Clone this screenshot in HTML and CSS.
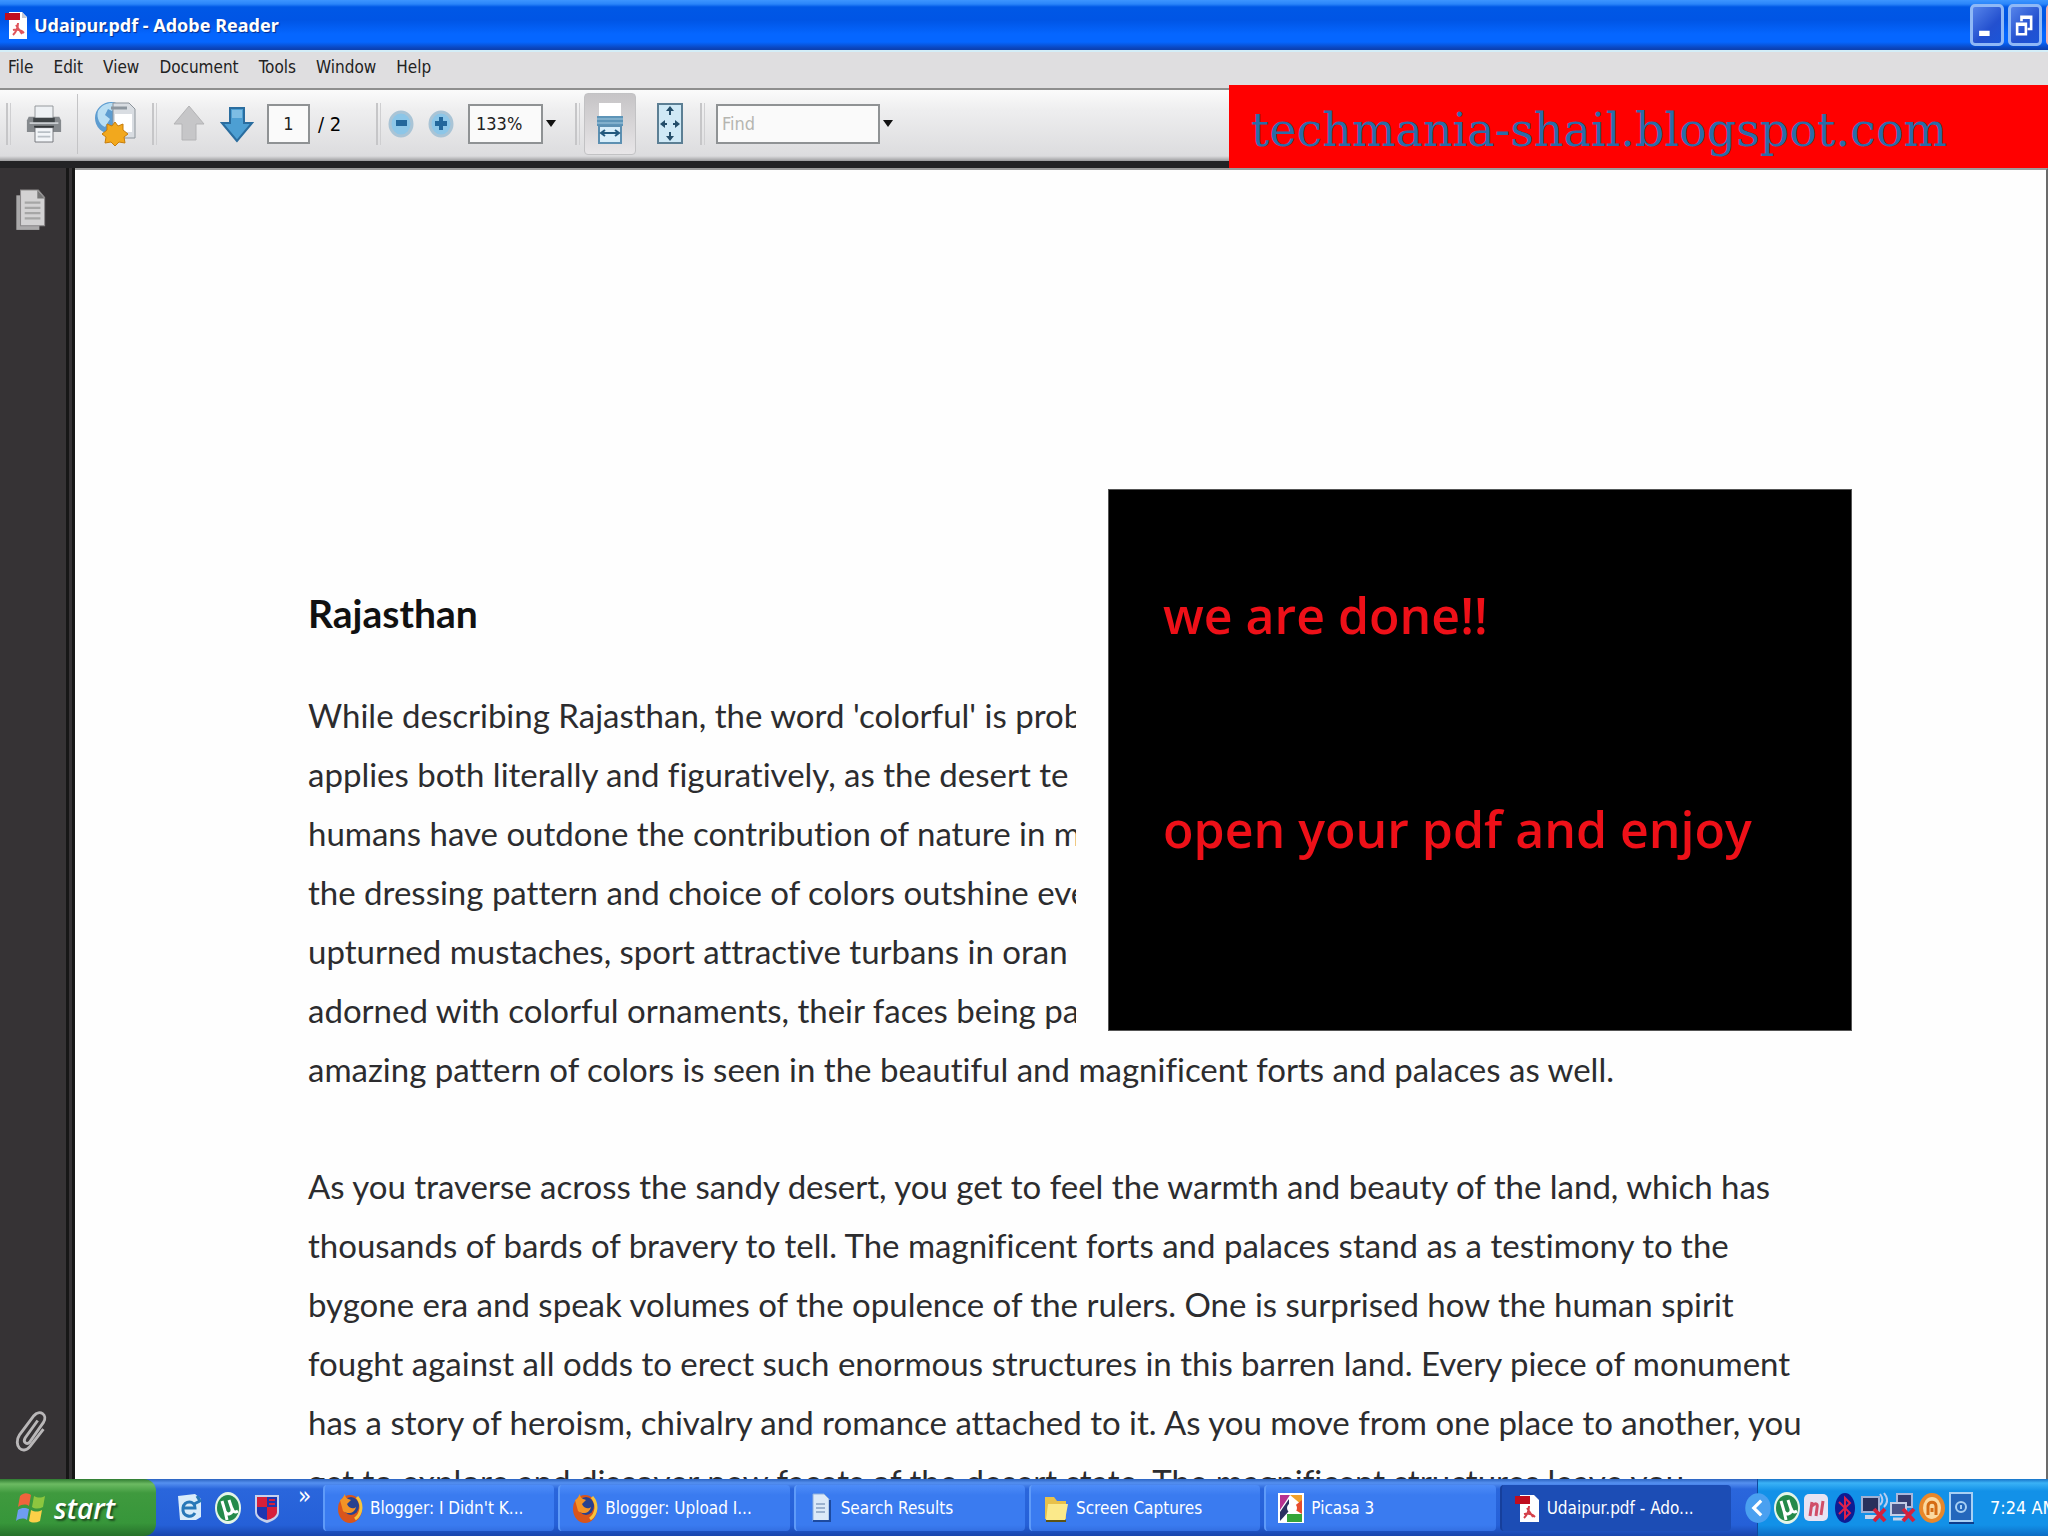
FILE: index.html
```
<!DOCTYPE html>
<html lang="en">
<head>
    <meta charset="UTF-8">
    <meta name="viewport" content="width=device-width, initial-scale=1.0">
    <title>Udaipur.pdf - Adobe Reader</title>
    <link rel="stylesheet" href="styles.css">
</head>
<body>

    <!-- title bar -->
    <header class="titlebar">
        <svg class="pdf-icon" viewBox="0 0 24 30">
            <path d="M5 2h13l5 5v22H5z" fill="#fff"/>
            <path d="M18 2v6h5z" fill="#c4c8d4"/>
            <path d="M1 3h15v7H1z" fill="#c00d1e"/>
            <path d="M9 25c4-4 5-8 5-12M9 20c4-1 8 0 11 3M12 15l6 9" fill="none" stroke="#e0555c" stroke-width="2"/>
        </svg>
        <h1>Udaipur.pdf - Adobe Reader</h1>
        <div class="window-buttons">
            <button class="win-btn" aria-label="Minimize"><svg viewBox="0 0 32 40"><path d="M7 26h12v6H7z" fill="#fff"/></svg></button>
            <button class="win-btn" aria-label="Restore"><svg viewBox="0 0 32 40"><path d="M12 15v-5h11v14h-4M12 11h11M7 18h10v12H7zM7 19h10" fill="none" stroke="#fff" stroke-width="3"/></svg></button>
            <button class="win-btn close" aria-label="Close"></button>
        </div>
    </header>

    <!-- menu -->
    <nav class="menubar">
        <button>File</button>
        <button>Edit</button>
        <button>View</button>
        <button>Document</button>
        <button>Tools</button>
        <button>Window</button>
        <button>Help</button>
    </nav>

    <!-- toolbar -->
    <div class="toolbar">
        <span class="grip"></span>
        <button class="tool print" aria-label="Print">
            <svg viewBox="0 0 40 44">
                <path d="M3 14h34l2 4v13H1V18z" fill="#85898d"/>
                <path d="M10 2h20v14H10z" fill="#eef1f4" stroke="#8d9194"/>
                <path d="M8 15h24v6H8z" fill="#3f4447"/>
                <path d="M4 21h32" stroke="#c8ccd0" stroke-width="2"/>
                <path d="M10 26h20v16H10z" fill="#f2f5f8" stroke="#6d7175"/>
                <path d="M9 25h22" stroke="#33373a" stroke-width="2"/>
                <path d="M13 31h14M13 36h14" stroke="#b9c0c6" stroke-width="2"/>
            </svg>
        </button>
        <span class="line"></span>
        <button class="tool share" aria-label="Collaborate">
            <svg viewBox="0 0 44 48">
                <circle cx="18" cy="18" r="16" fill="#5d9cd0"/>
                <path d="M5 11c5-9 15-9 19-7l-5 7-4-2-3 6 5 4-5 8C7 25 3 18 5 11z" fill="#b9def3"/>
                <path d="M20 3h16l6 6v29H20z" fill="#d9dde2" stroke="#8c949b"/>
                <path d="M22 14h17v18H22z" fill="#fff"/>
                <path d="M18 8h16" stroke="#8d969e" stroke-width="3"/>
                <path d="M22 22l3 4 5-2v6l5 4-4 3 1 6-6-1-4 4-4-4-6 1 1-6-4-3 5-4v-6l5 2z" fill="#f2a81d" stroke="#c77d0b"/>
            </svg>
        </button>
        <span class="grip wide"></span>
        <button class="tool" aria-label="Previous page">
            <svg viewBox="0 0 34 38"><path d="M17 1l15 18h-8v16H10V19H2z" fill="#c6c6c8" stroke="#b4b4b6"/></svg>
        </button>
        <button class="tool" aria-label="Next page">
            <svg viewBox="0 0 34 38">
                <path d="M17 36L2 18h8V3h14v15h8z" fill="#4d9fd3" stroke="#2a6d9f" stroke-width="2"/>
                <path d="M12 5h10v8H12z" fill="#7dbde4"/>
            </svg>
        </button>
        <input class="field page-no" type="text" value="1" aria-label="Page number">
        <span class="page-count">/ 2</span>
        <span class="grip"></span>
        <button class="tool zoom" aria-label="Zoom out">
            <svg viewBox="0 0 26 28"><ellipse cx="13" cy="14" rx="11" ry="12" fill="#8cc6e8" stroke="#a9c4d6" stroke-width="3"/><path d="M8 10h11v6H8z" fill="#22679c"/></svg>
        </button>
        <button class="tool zoom" aria-label="Zoom in">
            <svg viewBox="0 0 26 28"><ellipse cx="13" cy="14" rx="11" ry="12" fill="#8cc6e8" stroke="#a9c4d6" stroke-width="3"/><path d="M11 7h4v4h4v5h-4v4h-4v-4H7v-5h4z" fill="#22679c"/></svg>
        </button>
        <input class="field zoom-level" type="text" value="133%" aria-label="Zoom level">
        <button class="drop" aria-label="Zoom levels"></button>
        <span class="grip"></span>
        <button class="tool fit active" aria-label="Fit width">
            <svg viewBox="0 0 28 44">
                <path d="M3 1h22v14H3z" fill="#fff"/>
                <path d="M1 14h26v10H1z" fill="#5e95b8"/>
                <path d="M1 17h26M1 21h26" stroke="#a4cae0"/>
                <path d="M3 24h22v17H3z" fill="#d8eefa" stroke="#5d90b2" stroke-width="2"/>
                <path d="M6 31h16M9 28l-4 3 4 3M19 28l4 3-4 3" fill="none" stroke="#23597e" stroke-width="2"/>
            </svg>
        </button>
        <button class="tool fit" aria-label="Fit page">
            <svg viewBox="0 0 28 44">
                <path d="M2 2h24v39H2z" fill="#cfe9f6" stroke="#5c7f94" stroke-width="2"/>
                <path d="M14 4l4 5h-8zM14 39l4-5h-8zM4 22l5-4v8zM24 22l-5-4v8z" fill="#244e6a"/>
                <path d="M14 8v5M14 30v5M8 22h3M17 22h3" stroke="#244e6a" stroke-width="2"/>
            </svg>
        </button>
        <span class="grip wide"></span>
        <input class="field find" type="text" placeholder="Find" aria-label="Find">
        <button class="drop" aria-label="Find options"></button>
        <div class="banner">techmania-shail.blogspot.com</div>
    </div>

    <!-- document -->
    <main class="viewer">
        <aside class="sidebar">
            <button aria-label="Pages">
                <svg viewBox="0 0 32 42">
                    <path d="M2 7h22v33H2z" fill="#aaa9aa"/>
                    <path d="M6 2h17l6 7v27H6z" fill="#d3d2d3" stroke="#8b898a"/>
                    <path d="M22 2v8h7z" fill="#777"/>
                    <path d="M10 14h15M10 19h15M10 24h15M10 29h15" stroke="#a6a6a6" stroke-width="2"/>
                </svg>
            </button>
            <button aria-label="Attachments">
                <svg viewBox="0 0 34 46">
                    <path d="M24 12L11 30c-3 5 2 8 5 4l14-20c5-8-4-14-10-7L5 27C-2 38 8 49 16 39l14-18" fill="none" stroke="#b9b7b8" stroke-width="3"/>
                </svg>
            </button>
        </aside>
        <article class="page">
            <h2>Rajasthan</h2>
            <p>
                While describing Rajasthan, the word 'colorful' is prob<br>
                applies both literally and figuratively, as the desert te<br>
                humans have outdone the contribution of nature in m<br>
                the dressing pattern and choice of colors outshine eve<br>
                upturned mustaches, sport attractive turbans in oran<br>
                adorned with colorful ornaments, their faces being pa<br>
                amazing pattern of colors is seen in the beautiful and magnificent forts and palaces as well.
            </p>
            <p>
                As you traverse across the sandy desert, you get to feel the warmth and beauty of the land, which has<br>
                thousands of bards of bravery to tell. The magnificent forts and palaces stand as a testimony to the<br>
                bygone era and speak volumes of the opulence of the rulers. One is surprised how the human spirit<br>
                fought against all odds to erect such enormous structures in this barren land. Every piece of monument<br>
                has a story of heroism, chivalry and romance attached to it. As you move from one place to another, you<br>
                get to explore and discover new facets of the desert state. The magnificent structures leave you
            </p>
            <div class="note">
                <div class="note-box">
                    <p>we are done!!</p>
                    <p>open your pdf and enjoy</p>
                </div>
            </div>
        </article>
    </main>

    <!-- taskbar -->
    <footer class="taskbar">
        <button class="start">
            <svg viewBox="0 0 32 36">
                <path d="M4 6c4-4 8-3 11-1l-2 11C10 14 6 14 2 17z" fill="#f0643c"/>
                <path d="M18 6c4 2 7 2 11 0l-2 11c-4 2-8 2-11 0z" fill="#8dc63f"/>
                <path d="M2 20c4-3 8-2 11-1l-2 11C8 28 4 28 0 31z" fill="#6f9df0"/>
                <path d="M15 20c4 2 7 2 11 0l-2 11c-4 2-8 2-11 0z" fill="#fbd048"/>
            </svg>
            start
        </button>
        <div class="quick">
            <button aria-label="Internet Explorer">
                <svg viewBox="0 0 28 34">
                    <path d="M3 5l17-2 6 5v18l-5 3H5z" fill="#d9ecfa"/>
                    <path d="M20 22c-4 6-13 3-12-5s12-8 12 0H9M22 5l3 5-6 3" fill="none" stroke="#2878b8" stroke-width="3"/>
                </svg>
            </button>
            <button aria-label="uTorrent">
                <svg viewBox="0 0 28 34"><use href="#torrent"/></svg>
            </button>
            <button aria-label="Security">
                <svg viewBox="0 0 28 34">
                    <path d="M2 4h24v17c0 6-6 9-12 11C8 30 2 27 2 21z" fill="#c6d1ec"/>
                    <path d="M4 6h10v10H4zM14 16h10v5c0 4-5 7-10 8z" fill="#d5203a"/>
                    <path d="M14 6h10v10H14zM4 16h10v13C9 28 4 25 4 21z" fill="#1d36b0"/>
                    <path d="M16 9h6M16 13h6" stroke="#d5203a" stroke-width="2"/>
                </svg>
            </button>
            <span class="more">»</span>
        </div>
        <div class="tasks">
            <button class="task"><svg viewBox="0 0 26 32"><use href="#firefox"/></svg>Blogger: I Didn't K...</button>
            <button class="task"><svg viewBox="0 0 26 32"><use href="#firefox"/></svg>Blogger: Upload I...</button>
            <button class="task">
                <svg viewBox="0 0 26 32"><path d="M5 2h11l5 5v22H5z" fill="#dce9f8" stroke="#8fb0dc"/><path d="M5 29h17V8" fill="none" stroke="#1d4aa0" stroke-width="2"/><path d="M8 12h9M8 16h9M8 20h9" stroke="#9cb2cf" stroke-width="2"/></svg>
                Search Results
            </button>
            <button class="task">
                <svg viewBox="0 0 26 32"><path d="M2 5h9l3 4h9v18H2z" fill="#e8c14a"/><path d="M5 12h20l-3 16H3z" fill="#fbe98a"/><path d="M3 29h20" stroke="#5d5313" stroke-width="2"/></svg>
                Screen Captures
            </button>
            <button class="task">
                <svg viewBox="0 0 26 32"><path d="M0 1h26v30H0z" fill="#fff"/><path d="M2 3h10L2 18z" fill="#b83290"/><path d="M12 3h12v10z" fill="#f2a12b"/><path d="M24 8v14l-10-6z" fill="#e64c2e"/><path d="M9 22h15v8H9z" fill="#36a43a"/><path d="M2 20l9-13v12l-9 10z" fill="#2b2f60"/><circle cx="14" cy="16" r="5" fill="#fff"/></svg>
                Picasa 3
            </button>
            <button class="task current">
                <svg viewBox="0 0 26 32"><path d="M6 3h14l5 5v22H6z" fill="#fff"/><path d="M1 4h15v8H1z" fill="#c00d1e"/><path d="M10 26c4-4 5-8 5-12M10 22c4-1 8 0 11 3M13 16l6 9" fill="none" stroke="#d4404a" stroke-width="2"/></svg>
                Udaipur.pdf - Ado...
            </button>
        </div>
        <div class="tray">
            <button class="expand" aria-label="Show hidden icons"><svg viewBox="0 0 26 32"><ellipse cx="13" cy="16" rx="12" ry="14" fill="#4aa0f0"/><path d="M16 9l-7 7 7 7" fill="none" stroke="#fff" stroke-width="3"/></svg></button>
            <svg viewBox="0 0 28 34"><g id="torrent"><ellipse cx="14" cy="17" rx="13" ry="16" fill="#e4f5e8"/><ellipse cx="14" cy="17" rx="11" ry="13" fill="#248a4b"/><path d="M8 10l3 10c2 5 8 3 7-2l-3-9M11 20l2 9M18 17c1 4 3 5 6 3" fill="none" stroke="#fff" stroke-width="3"/></g></svg>
            <svg viewBox="0 0 28 34"><rect x="2" y="3" width="24" height="27" rx="5" fill="#e8e3f2"/><path d="M8 25l2-14M10 15c4-4 6-2 5 2l-1 8M19 24l2-14" fill="none" stroke="#d04e68" stroke-width="3"/></svg>
            <svg viewBox="0 0 28 34"><ellipse cx="14" cy="17" rx="10" ry="15" fill="#0d1c94"/><path d="M8 11l11 11-5 5V7l5 5L8 23" fill="none" stroke="#e0214c" stroke-width="2"/></svg>
            <svg viewBox="0 0 28 34"><path d="M2 6h17v15H2z" fill="#28305c" stroke="#9fb0d4" stroke-width="2"/><path d="M5 26h12" stroke="#c9d3e8" stroke-width="4"/><path d="M20 3c3 4 3 8 0 11M24 2c4 5 4 10 0 14" fill="none" stroke="#b8cdf0" stroke-width="2"/><path d="M14 18l11 12M25 18L14 30" stroke="#d3213c" stroke-width="4"/></svg>
            <svg viewBox="0 0 28 34"><path d="M8 3h15v13H8z" fill="#343c70" stroke="#a9b7dc" stroke-width="2"/><path d="M2 12h15v12H2z" fill="#4a5488" stroke="#c3cde6" stroke-width="2"/><path d="M4 28h12" stroke="#c9d3e8" stroke-width="3"/><path d="M14 18l11 12M25 18L14 30" stroke="#d3213c" stroke-width="4"/></svg>
            <svg viewBox="0 0 28 34"><ellipse cx="14" cy="17" rx="13" ry="15" fill="#e8872a"/><ellipse cx="14" cy="17" rx="9" ry="11" fill="#fbd9a0"/><path d="M10 24v-9c0-5 8-5 8 0v9M14 17v4" fill="none" stroke="#d56c14" stroke-width="3"/></svg>
            <svg viewBox="0 0 28 34"><path d="M3 2h22v28H3z" fill="#2467bc" stroke="#a8d0f4" stroke-width="2"/><path d="M2 32h25" stroke="#0d3d8c" stroke-width="2"/><circle cx="14" cy="16" r="5" fill="none" stroke="#a8d0f4" stroke-width="2"/><path d="M14 14v4" stroke="#a8d0f4" stroke-width="2"/></svg>
            <span class="clock">7:24 AM</span>
        </div>
    </footer>

    <!-- shared icon -->
    <svg class="defs">
        <defs>
            <g id="firefox">
                <ellipse cx="13" cy="17" rx="12" ry="14" fill="#d9551b"/>
                <ellipse cx="14" cy="14" rx="8" ry="9" fill="#27418f"/>
                <path d="M3 8c3-1 4-5 5-6 0 4 3 5 6 6l-4 4c2 5 7 5 9 3-1 6-8 8-13 4z" fill="#f39426"/>
                <path d="M20 5c6 7 5 17-2 22" fill="none" stroke="#f7c43c" stroke-width="3"/>
            </g>
        </defs>
    </svg>

</body>
</html>
```
FILE: styles.css
```
* {
    box-sizing: border-box;
}

body {
    margin: 0;
    height: 100vh;
    display: flex;
    flex-direction: column;
    overflow: hidden;
    font-family: "DejaVu Sans Condensed", "Open Sans", sans-serif;
    font-size: 17px;
    background-color: #fff;
}

button {
    border: none;
    padding: 0;
    background: none;
    font-family: inherit;
    font-size: inherit;
    color: inherit;
}

svg {
    display: block;
    flex: none;
}

.defs {
    position: absolute;
    width: 0;
    height: 0;
}

/* title bar */
.titlebar {
    flex: none;
    display: flex;
    align-items: center;
    height: 50px;
    padding-left: 4px;
    gap: 6px;
    overflow: hidden;
    background: linear-gradient(#3d95ff 0, #2a85fa 4px, #0058e6 7px, #0055e5 20px, #0566ff 34px, #0566ff 42px, #0b45bd 48px, #0b3fae 50px);
}

.pdf-icon {
    width: 24px;
    height: 30px;
}

.titlebar h1 {
    flex: 1;
    margin: 0;
    font-size: 18px;
    font-family: "Noto Sans", sans-serif;
    font-weight: bold;
    color: #fff;
    text-shadow: 1px 1px 1px #0a2f8c;
}

.window-buttons {
    display: flex;
    gap: 4px;
    margin-right: -32px;
}

.win-btn {
    width: 34px;
    height: 42px;
    border: 3px solid #8fb8f6;
    border-radius: 5px;
    background: linear-gradient(135deg, #5684ea, #2350cf 60%, #1b55d8);
}

.win-btn.close {
    border-color: #f0b3b0;
    background: #d8452a;
}

/* menu */
.menubar {
    flex: none;
    display: flex;
    align-items: center;
    gap: 20px;
    height: 40px;
    padding: 0 8px 6px;
    border-top: 2px solid #d4eef8;
    border-bottom: 2px solid #8e8e8e;
    background-color: #dfdee0;
    color: #222;
}

/* toolbar */
.toolbar {
    flex: none;
    position: relative;
    display: flex;
    align-items: center;
    height: 78px;
    padding: 0 8px 4px 6px;
    border-bottom: 7px solid #232325;
    background: linear-gradient(#fbfbfb, #eeeeef 20px, #dcdcde 66px, #9c9c9e 71px);
}

.grip {
    width: 5px;
    height: 42px;
    border-left: 2px solid #c6c6c8;
    border-right: 1px solid #cfcfd1;
}

.grip.wide {
    margin-right: 8px;
}

.line {
    width: 1px;
    height: 60px;
    background-color: #c4c4c6;
}

.tool {
    display: flex;
    align-items: center;
    justify-content: center;
    width: 48px;
}

.tool svg {
    width: 34px;
    height: 38px;
}

.print {
    width: 66px;
}

.print svg {
    width: 36px;
    height: 44px;
}

.share {
    width: 74px;
}

.share svg {
    width: 44px;
    height: 48px;
}

.zoom {
    width: 40px;
}

.zoom svg {
    width: 26px;
    height: 30px;
}

.fit {
    width: 52px;
    height: 62px;
    margin: 0 4px;
    border-radius: 4px;
}

.fit svg {
    width: 28px;
    height: 44px;
}

.active {
    border: 1px solid #c2c2c4;
    background: linear-gradient(#c6c4c6, #e8e6e8);
}

.field {
    height: 40px;
    border: 2px solid #8f9294;
    background-color: #fafafa;
    font-family: inherit;
    font-size: 18px;
    color: #222;
}

.field::placeholder {
    color: #b5b5b0;
    opacity: 1;
}

.page-no {
    width: 43px;
    margin-left: 6px;
    text-align: center;
}

.page-count {
    width: 58px;
    margin-left: 8px;
    font-size: 20px;
}

.zoom-level {
    width: 75px;
    margin-left: 7px;
    padding: 0 6px;
}

.drop {
    width: 16px;
    height: 40px;
    display: flex;
    align-items: center;
    justify-content: center;
    margin-right: 16px;
}

.drop::after {
    content: "";
    border: 5px solid transparent;
    border-top: 7px solid #111;
    border-bottom: none;
}

.find {
    width: 164px;
    margin-left: 3px;
    padding: 0 4px;
}

/* blog name laid over the toolbar */
.banner {
    position: absolute;
    top: -5px;
    right: 0;
    bottom: -7px;
    width: 40%;
    padding-left: 22px;
    background-color: #f00;
    color: #2a6ca8;
    font-family: "DejaVu Serif", serif;
    font-size: 46px;
    line-height: 90px;
    white-space: nowrap;
}

/* document */
.viewer {
    flex: 1;
    min-height: 0;
    display: flex;
}

.sidebar {
    flex: none;
    width: 75px;
    display: flex;
    flex-direction: column;
    justify-content: space-between;
    padding: 20px 14px 26px;
    border-right: 9px double #171717;
    background-color: #363335;
}

.sidebar svg {
    width: 34px;
    height: 44px;
}

.page {
    position: relative;
    flex: 1;
    overflow: hidden;
    padding: 413px 0 0 233px;
    border-top: 2px solid #9d9d9d;
    border-right: 2px solid #6b6b6b;
    background-color: #fefefe;
    color: #2c2c2e;
    font-family: "Lato", "Open Sans", sans-serif;
    font-variant-ligatures: none;
    white-space: nowrap;
}

.page h2 {
    margin: 0 0 43px;
    font-size: 39px;
    line-height: 60px;
    color: #111;
}

.page p {
    margin: 0 0 58px;
    font-size: 33px;
    line-height: 59px;
}

/* picture pasted over the text */
.note {
    position: absolute;
    top: 289px;
    left: 1001px;
    padding: 30px 32px 27px;
    background-color: #fefefe;
}

.note-box {
    width: 744px;
    height: 542px;
    padding: 82px 54px;
    border: 1px solid #555;
    background-color: #000;
}

.note .note-box p {
    margin: 0 0 128px;
    color: #ee1018;
    font-family: "Open Sans", sans-serif;
    font-weight: 600;
    font-size: 50px;
    line-height: 86px;
}

/* taskbar */
.taskbar {
    flex: none;
    display: flex;
    align-items: stretch;
    height: 57px;
    overflow: hidden;
    background: linear-gradient(#2b62c0 0, #5590f0 4px, #2a66dc 10px, #2560d8 46px, #1845ac 57px);
    color: #fff;
}

.start {
    display: flex;
    align-items: center;
    gap: 6px;
    width: 156px;
    padding-left: 16px;
    border-radius: 0 12px 12px 0;
    background: linear-gradient(#2f7c31 0, #6cba62 5px, #3f9a3e 14px, #37963a 44px, #26702a 57px);
    font-family: "Open Sans", sans-serif;
    font-size: 28px;
    font-style: italic;
    font-weight: 600;
    text-shadow: 2px 2px 2px #1d4f1f;
}

.start svg {
    width: 32px;
    height: 38px;
}

.quick {
    display: flex;
    align-items: center;
    gap: 11px;
    width: 167px;
    padding-left: 19px;
}

.quick svg {
    width: 28px;
    height: 34px;
}

.more {
    align-self: flex-start;
    margin-left: 6px;
    font-size: 24px;
    line-height: 34px;
}

.tasks {
    flex: 1;
    display: flex;
    gap: 4px;
    min-width: 0;
    padding-right: 26px;
}

.task {
    flex: 1;
    min-width: 0;
    display: flex;
    align-items: center;
    gap: 7px;
    padding-left: 12px;
    margin: 6px 0 5px;
    border-left: 2px solid #5f9bf8;
    border-radius: 4px;
    background: linear-gradient(#4d8cf8, #3a7bf0 10px, #3a7bf0 40px, #336fe2);
    white-space: nowrap;
}

.task svg {
    width: 26px;
    height: 32px;
}

.current {
    border-color: #163f9c;
    background: #1c4db5;
}

.tray {
    display: flex;
    align-items: center;
    gap: 1px;
    width: 291px;
    border-left: 1px solid #0f4a9f;
    background: linear-gradient(#1873c8 0, #3ab2f6 4px, #1291e8 12px, #1291e8 46px, #0c6cc4 57px);
    white-space: nowrap;
}

.tray svg {
    width: 28px;
    height: 34px;
}

.expand {
    margin-left: -14px;
}

.clock {
    margin-left: 14px;
    font-size: 18px;
}
```
